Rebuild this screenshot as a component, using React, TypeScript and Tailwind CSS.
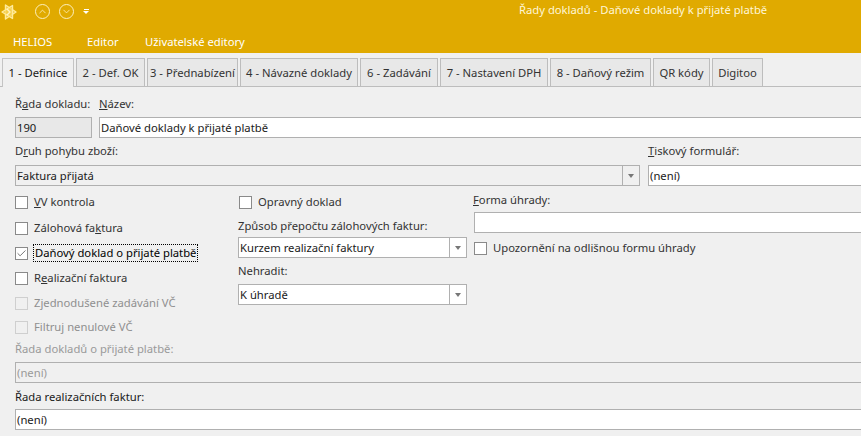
import { Check, ChevronDown, ChevronUp } from "lucide-react";
import type { ReactNode } from "react";

const tabs = [
  { label: "2 - Def. OK", w: "w-[69px]" },
  { label: "3 - Přednabízení", w: "w-[91px]" },
  { label: "4 - Návazné doklady", w: "w-[118px]" },
  { label: "6 - Zadávání", w: "w-[78px]" },
  { label: "7 - Nastavení DPH", w: "w-[108px]" },
  { label: "8 - Daňový režim", w: "w-[101px]" },
  { label: "QR kódy", w: "w-[57px]" },
  { label: "Digitoo", w: "w-[51px]" },
];

function Logo() {
  return (
    <svg viewBox="0 0 16 16" className="h-[16px] w-[16px]" fill="none" stroke="#ffeb9c" strokeWidth="1.4" strokeLinejoin="round">
      <path d="M4.5 1 L15 8 L4.5 15 Z" fill="#f3c73a" />
      <path d="M11.5 1.5 L1 8 L11.5 14.5 Z" fill="#f6d256" fillOpacity="0.75" />
      <path d="M6 5 L9 8 L6 11" stroke="#fff4c4" />
    </svg>
  );
}

function RoundButton({ children }: { children: ReactNode }) {
  return (
    <span className="flex h-[15px] w-[15px] items-center justify-center rounded-full border-[1.5px] border-[#fdf0bd] text-[#fdf0bd]">
      {children}
    </span>
  );
}

function Field({
  value = "",
  className = "",
  tone = "bg-white",
  select = false,
  muted = false,
}: {
  value?: string;
  className?: string;
  tone?: string;
  select?: boolean;
  muted?: boolean;
}) {
  return (
    <div className={`flex h-[21px] items-center border border-[#b0b0b0] ${tone} ${className}`}>
      <span className={`flex-1 truncate pl-px ${muted ? "text-[#9a9a9a]" : "text-[#1a1a1a]"}`}>{value}</span>
      {select && (
        <span className="flex h-full w-[17px] items-center justify-center border-l border-[#b0b0b0]">
          <span className="h-0 w-0 border-x-[3.5px] border-t-[4px] border-x-transparent border-t-[#777777]" />
        </span>
      )}
    </div>
  );
}

function CheckRow({
  label,
  checked = false,
  disabled = false,
  focused = false,
  className = "",
}: {
  label: ReactNode;
  checked?: boolean;
  disabled?: boolean;
  focused?: boolean;
  className?: string;
}) {
  return (
    <div className={`flex items-center ${className}`}>
      <span
        className={`flex h-[13px] w-[13px] shrink-0 items-center justify-center border ${
          disabled ? "border-[#cfcfcf] bg-[#f0f0f0]" : "border-[#8a8a8a] bg-white"
        }`}
      >
        {checked && <Check size={11} strokeWidth={1.6} className="text-[#444444]" />}
      </span>
      <span
        className={`ml-[5px] whitespace-nowrap px-px ${disabled ? "text-[#8f8f8f]" : "text-[#333333]"} ${
          focused ? "border border-dotted border-black text-black" : ""
        }`}
      >
        {label}
      </span>
    </div>
  );
}

export default function App() {
  return (
    <div className="flex h-[436px] w-[861px] flex-col overflow-hidden bg-[#f0f0f0] font-['Noto_Sans',sans-serif] text-[11.25px] leading-[16px] text-[#333333]">
      <header className="h-[53px] bg-[#e0aa00] text-white">
        <div className="flex h-[33px] items-start pt-[3px]">
          <div className="ml-px mt-[1px] flex w-[34px]">
            <Logo />
          </div>
          <div className="mt-[1px] flex items-center gap-[9px]">
            <RoundButton>
              <ChevronUp size={11} strokeWidth={1.8} />
            </RoundButton>
            <RoundButton>
              <ChevronDown size={11} strokeWidth={1.8} />
            </RoundButton>
            <span className="flex flex-col items-center gap-px">
              <span className="h-px w-[5px] bg-white" />
              <span className="h-0 w-0 border-x-[3px] border-t-[3px] border-x-transparent border-t-white" />
            </span>
          </div>
          <span className="ml-[430px] mt-[-1px] text-[#fff6d6]">Řady dokladů - Daňové doklady k přijaté platbě</span>
        </div>
        <nav className="ml-[13px] flex pt-px">
          <span className="w-[74px]">HELIOS</span>
          <span className="w-[58px]">Editor</span>
          <span>Uživatelské editory</span>
        </nav>
      </header>

      <div className="mt-[5px] flex h-[29px] items-end gap-[2px] border-b border-[#bdbdbd] pl-[2px]">
        <div className="z-10 mb-[-1px] flex h-[29px] w-[72px] items-center justify-center border border-b-0 border-[#c4c4c4] bg-[#f0f0f0] text-[#1a1a1a]">
          1 - Definice
        </div>
        {tabs.map((tab) => (
          <div
            key={tab.label}
            className={`flex h-[28px] items-center justify-center border border-b-0 border-[#bdbdbd] bg-[#e8e8e8] ${tab.w}`}
          >
            {tab.label}
          </div>
        ))}
      </div>

      <main className="pl-[15px]">
        <div className="mt-[9px] flex h-[16px]">
          <span className="w-[84px]">
            Ř<u>a</u>da dokladu:
          </span>
          <span>
            <u>N</u>ázev:
          </span>
        </div>
        <div className="mt-[5px] flex gap-[7px]">
          <Field value="190" className="w-[77px]" tone="bg-[#e8e8e8]" />
          <Field value="Daňové doklady k přijaté platbě" className="flex-1 border-r-0" />
        </div>

        <div className="mt-[5px] flex h-[16px]">
          <span className="w-[633px]">
            D<u>r</u>uh pohybu zboží:
          </span>
          <span>
            <u>T</u>iskový formulář:
          </span>
        </div>
        <div className="mt-[6px] flex gap-[8px]">
          <Field value="Faktura přijatá" className="w-[625px]" tone="bg-[#f0f0f0]" select />
          <Field value="(není)" className="flex-1 border-r-0" />
        </div>

        <div className="flex">
          <div className="w-[223px] pt-[8px]">
            <div className="flex flex-col gap-[9px]">
              <CheckRow label={<><u>V</u>V kontrola</>} />
              <CheckRow label={<>Zálohová fa<u>k</u>tura</>} className="mt-px" />
              <CheckRow label="Daňový doklad o přijaté platbě" checked focused className="-my-px" />
              <CheckRow label={<>R<u>e</u>alizační faktura</>} />
              <CheckRow label="Zjednodušené zadávání VČ" disabled />
              <CheckRow label="Filtruj nenulové VČ" disabled className="-mt-px" />
            </div>
          </div>

          <div className="w-[229px] pt-[8px]">
            <CheckRow label="Opravný doklad" className="ml-px" />
            <div className="mt-[8px] h-[16px]">Způsob přepočtu zálohových faktur:</div>
            <Field value="Kurzem realizační faktury" className="mt-[3px]" select />
            <div className="mt-[5px] h-[16px]">Nehradit:</div>
            <Field value="K úhradě" className="mt-[5px]" select />
          </div>

          <div className="ml-[7px] flex-1 pt-[6px]">
            <div className="-ml-px h-[16px]">
              <u>F</u>orma úhrady:
            </div>
            <Field className="mt-[4px] border-r-0" />
            <CheckRow label="Upozornění na odlišnou formu úhrady" className="mt-[7px]" />
          </div>
        </div>

        <div className="mt-[6px] h-[16px] text-[#9a9a9a]">Řada dokladů o přijaté platbě:</div>
        <Field value="(není)" className="mt-[5px] border-r-0" tone="bg-[#f0f0f0]" muted />
        <div className="mt-[6px] h-[16px] text-[#1a1a1a]">Řada realizačních faktur:</div>
        <Field value="(není)" className="mt-[4px] border-r-0" />
      </main>
    </div>
  );
}
